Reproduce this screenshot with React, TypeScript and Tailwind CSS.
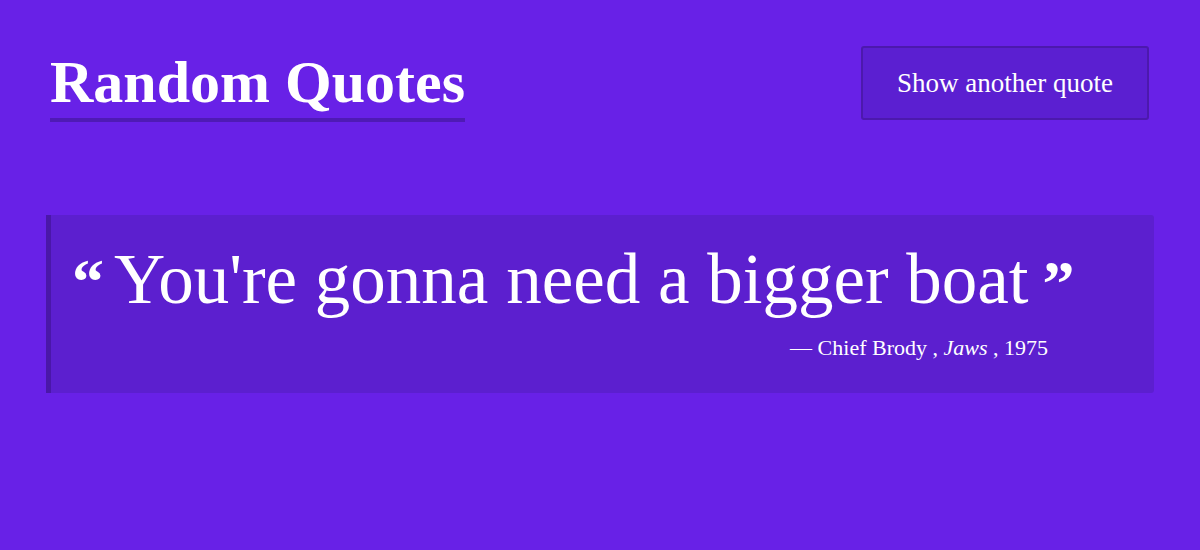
const serif = { fontFamily: '"Liberation Serif", "DejaVu Serif", serif' };

export default function App() {
	return (
		<div className="min-h-[550px] w-full bg-[#6821e7] text-white" style={serif}>
			<header className="flex items-start justify-between px-[50px] pt-[46px]">
				<h1 className="border-b-4 border-[#4f1ab5] text-[60px] font-bold leading-[72px]">
					Random Quotes
				</h1>
				<button className="mr-[1px] h-[74px] w-[288px] rounded-[3px] border-2 border-[#4c19ad] bg-[#5b1fd1] text-[27px]">
					Show another quote
				</button>
			</header>

			<div className="px-[46px] pt-[93px]">
				<blockquote className="h-[178px] rounded-r-[3px] border-l-[5px] border-[#4a17a9] bg-[#5c1fcf] pl-[21px] pt-[24px]">
					<p className="flex h-[80px] items-start overflow-visible text-[71px] leading-[80px]">
						<span className="mr-[10px] mt-[11px] text-[64px] leading-[64px] font-bold">“</span>
						<span>You're gonna need a bigger boat</span>
						<span className="ml-[14px] mt-[13px] text-[64px] leading-[64px] font-bold">”</span>
					</p>
					<p className="mt-[12px] pr-[106px] text-right text-[22px]">
						— Chief Brody , <cite className="italic">Jaws</cite> , 1975
					</p>
				</blockquote>
			</div>
		</div>
	);
}
